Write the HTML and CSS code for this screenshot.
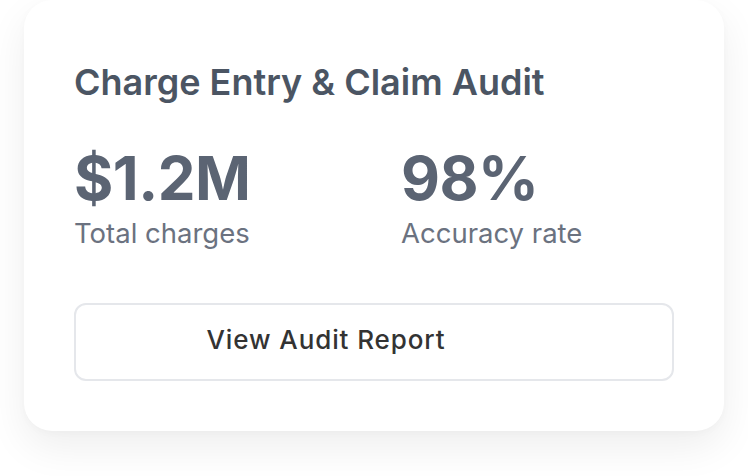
FILE: index.html
```html
<!DOCTYPE html>
<html lang="en">
<head>
<meta charset="utf-8">
<title>Charge Entry & Claim Audit</title>
<link rel="stylesheet" href="styles.css">
</head>
<body>
  <main class="page">
    <section class="card">
      <h2 class="card-title">Charge Entry &amp; Claim Audit</h2>
      <div class="stats">
        <div class="stat">
          <div class="stat-value">$1.2M</div>
          <div class="stat-label">Total charges</div>
        </div>
        <div class="stat">
          <div class="stat-value">98%</div>
          <div class="stat-label">Accuracy rate</div>
        </div>
      </div>
      <button class="report-btn" type="button">View Audit Report</button>
    </section>
  </main>
</body>
</html>
```
FILE: styles.css
```css
* { box-sizing: border-box; }
html, body { margin: 0; padding: 0; background: #ffffff; }
html, body { min-height: 100%; }
body { font-family: Inter, "Noto Sans", "Liberation Sans", sans-serif; }
.page { padding: 0 24px 48px; }
.card {
  width: 700px;
  background: #ffffff;
  border-radius: 28px;
  padding: 62px 50px 50px;
  box-shadow: 0 16px 40px rgba(0, 0, 0, 0.07), 0 2px 8px rgba(0, 0, 0, 0.025);
}
.card-title {
  margin: 0;
  font-size: 36px;
  line-height: 40px;
  font-weight: 600;
  color: #4b5563;
}
.stats {
  display: grid;
  grid-template-columns: 1fr 1fr;
  column-gap: 54px;
  margin-top: 46px;
}
.stat-value {
  font-size: 60px;
  line-height: 60px;
  font-weight: 700;
  letter-spacing: -0.5px;
  color: #5b6473;
}
.stat-label {
  margin-top: 7px;
  font-size: 27.5px;
  line-height: 36px;
  color: #6b7280;
}
.report-btn {
  display: flex;
  align-items: center;
  justify-content: center;
  width: 100%;
  height: 78px;
  margin-top: 52px;
  padding: 0 96px 6px 0;
  background: #ffffff;
  border: 2px solid #e5e7eb;
  border-radius: 12px;
  font-family: inherit;
  font-size: 26px;
  font-weight: 500;
  letter-spacing: 0.9px;
  color: #333333;
}
```
